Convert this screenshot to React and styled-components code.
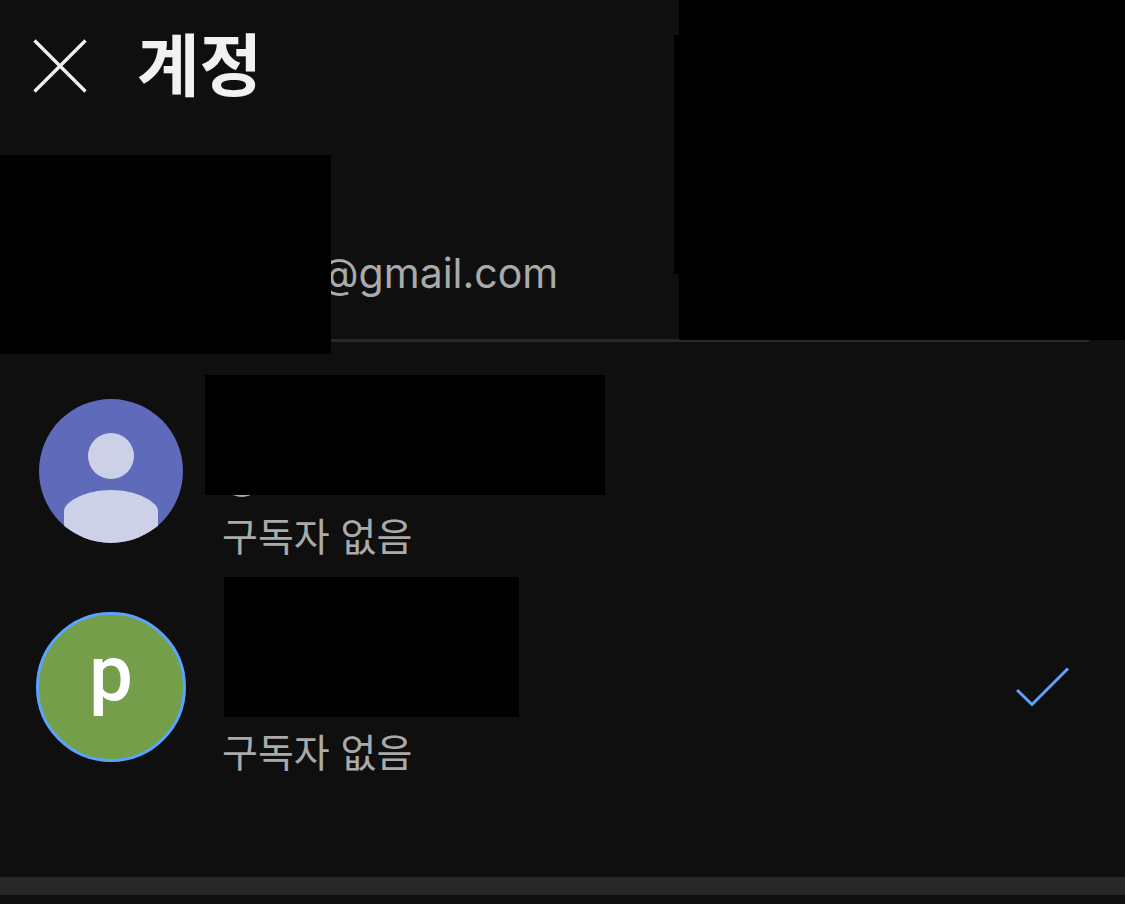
import React from "react";
import styled, { createGlobalStyle } from "styled-components";

const GlobalStyle = createGlobalStyle`
  *, *::before, *::after { box-sizing: border-box; }
  body {
    margin: 0;
    background: #0f0f0f;
    color: #f1f1f1;
    font-family: Inter, "Noto Sans CJK KR", sans-serif;
  }
`;

const Page = styled.main`
  display: flex;
  flex-direction: column;
  min-height: 100vh;
  overflow: hidden;
`;

const Top = styled.div`
  position: relative;
`;

const Header = styled.header`
  display: flex;
  align-items: center;
  gap: 41px;
  height: 132px;
  padding: 0 24px;
`;

const CloseButton = styled.button`
  display: flex;
  padding: 0;
  border: 0;
  background: none;
  color: #f1f1f1;
  cursor: pointer;
`;

const Title = styled.h1`
  margin: 0;
  padding-bottom: 9px;
  font-family: "Noto Sans CJK KR", sans-serif;
  font-size: 68px;
  line-height: 96px;
  font-weight: 700;
`;

const Profile = styled.section`
  height: 207px;
  padding: 111px 36px 0 319px;
`;

const Email = styled.p`
  margin: 0;
  color: #aaaaaa;
  font-size: 41px;
  line-height: 60px;
`;

const Divider = styled.hr`
  height: 3px;
  margin: 0 36px;
  border: 0;
  background: #282828;
`;

const Mask = styled.div`
  position: absolute;
  top: ${(p) => p.$top}px;
  left: ${(p) => (p.$left === undefined ? "auto" : `${p.$left}px`)};
  right: ${(p) => (p.$right === undefined ? "auto" : `${p.$right}px`)};
  width: ${(p) => p.$width}px;
  height: ${(p) => p.$height}px;
  background: #000000;
`;

const Accounts = styled.ul`
  list-style: none;
  margin: 0;
  padding: 21px 0 82px;
`;

const Item = styled.li`
  position: relative;
`;

const AccountButton = styled.button`
  display: flex;
  align-items: center;
  gap: 36px;
  width: 100%;
  height: 216px;
  padding: 0 54px 0 36px;
  border: 0;
  background: none;
  color: #aaaaaa;
  font-family: inherit;
  font-size: 39px;
  line-height: 62px;
  text-align: left;
  cursor: pointer;
`;

const Avatar = styled.span`
  display: flex;
  flex: none;
  align-items: center;
  justify-content: center;
  width: 150px;
  height: 150px;
  border: 3px solid ${(p) => (p.$selected ? "#5ba3ff" : "transparent")};
  border-radius: 50%;
  background: ${(p) => p.$color} ${(p) => (p.$selected ? "border-box" : "padding-box")};
  overflow: hidden;
`;

const Initial = styled.span`
  padding-bottom: 26px;
  color: #ffffff;
  font-family: Roboto, sans-serif;
  font-size: 78px;
  font-weight: 500;
  line-height: 96px;
`;

const Details = styled.span`
  display: flex;
  flex: 1;
  flex-direction: column;
  align-self: stretch;
  justify-content: flex-end;
  padding-bottom: 11px;
`;

const Band = styled.div`
  height: 18px;
  background: #282828;
`;

const CloseIcon = () => (
  <svg width="72" height="72" viewBox="0 0 72 72" fill="none" stroke="currentColor" strokeWidth="3.3" aria-hidden="true">
    <path d="M10.5 10.5 61.5 61.5M61.5 10.5 10.5 61.5" />
  </svg>
);

const CheckIcon = () => (
  <svg width="55" height="42" viewBox="0 0 55 42" fill="none" stroke="#5ba3ff" strokeWidth="3" aria-hidden="true">
    <path d="M1 24 16 38.5 52 2.5" />
  </svg>
);

const PersonIcon = () => (
  <svg width="144" height="144" viewBox="0 0 144 144" fill="#cdd1e8" aria-hidden="true">
    <circle cx="72" cy="57" r="23" />
    <path d="M25 144V112C25 103 46 91 72 91s47 12 47 21v32Z" />
  </svg>
);

export default function App() {
  return (
    <>
      <GlobalStyle />
      <Page>
        <Top>
          <Header>
            <CloseButton type="button" aria-label="닫기">
              <CloseIcon />
            </CloseButton>
            <Title>계정</Title>
          </Header>
          <Profile>
            <Email>@gmail.com</Email>
          </Profile>
          <Divider />
          <Mask $top={155} $left={0} $width={331} $height={199} />
          <Mask $top={0} $right={0} $width={446} $height={340} />
          <Mask $top={35} $right={0} $width={451} $height={239} />
        </Top>
        <Accounts>
          <Item>
            <AccountButton type="button">
              <Avatar $color="#5f6aba">
                <PersonIcon />
              </Avatar>
              <Details>
                <span>@</span>
                <span>구독자 없음</span>
              </Details>
            </AccountButton>
            <Mask $top={12} $left={205} $width={400} $height={120} />
          </Item>
          <Item>
            <AccountButton type="button" aria-current="true">
              <Avatar $color="#749e49" $selected>
                <Initial>p</Initial>
              </Avatar>
              <Details>
                <span>구독자 없음</span>
              </Details>
              <CheckIcon />
            </AccountButton>
            <Mask $top={-2} $left={224} $width={295} $height={140} />
          </Item>
        </Accounts>
        <Band />
      </Page>
    </>
  );
}
